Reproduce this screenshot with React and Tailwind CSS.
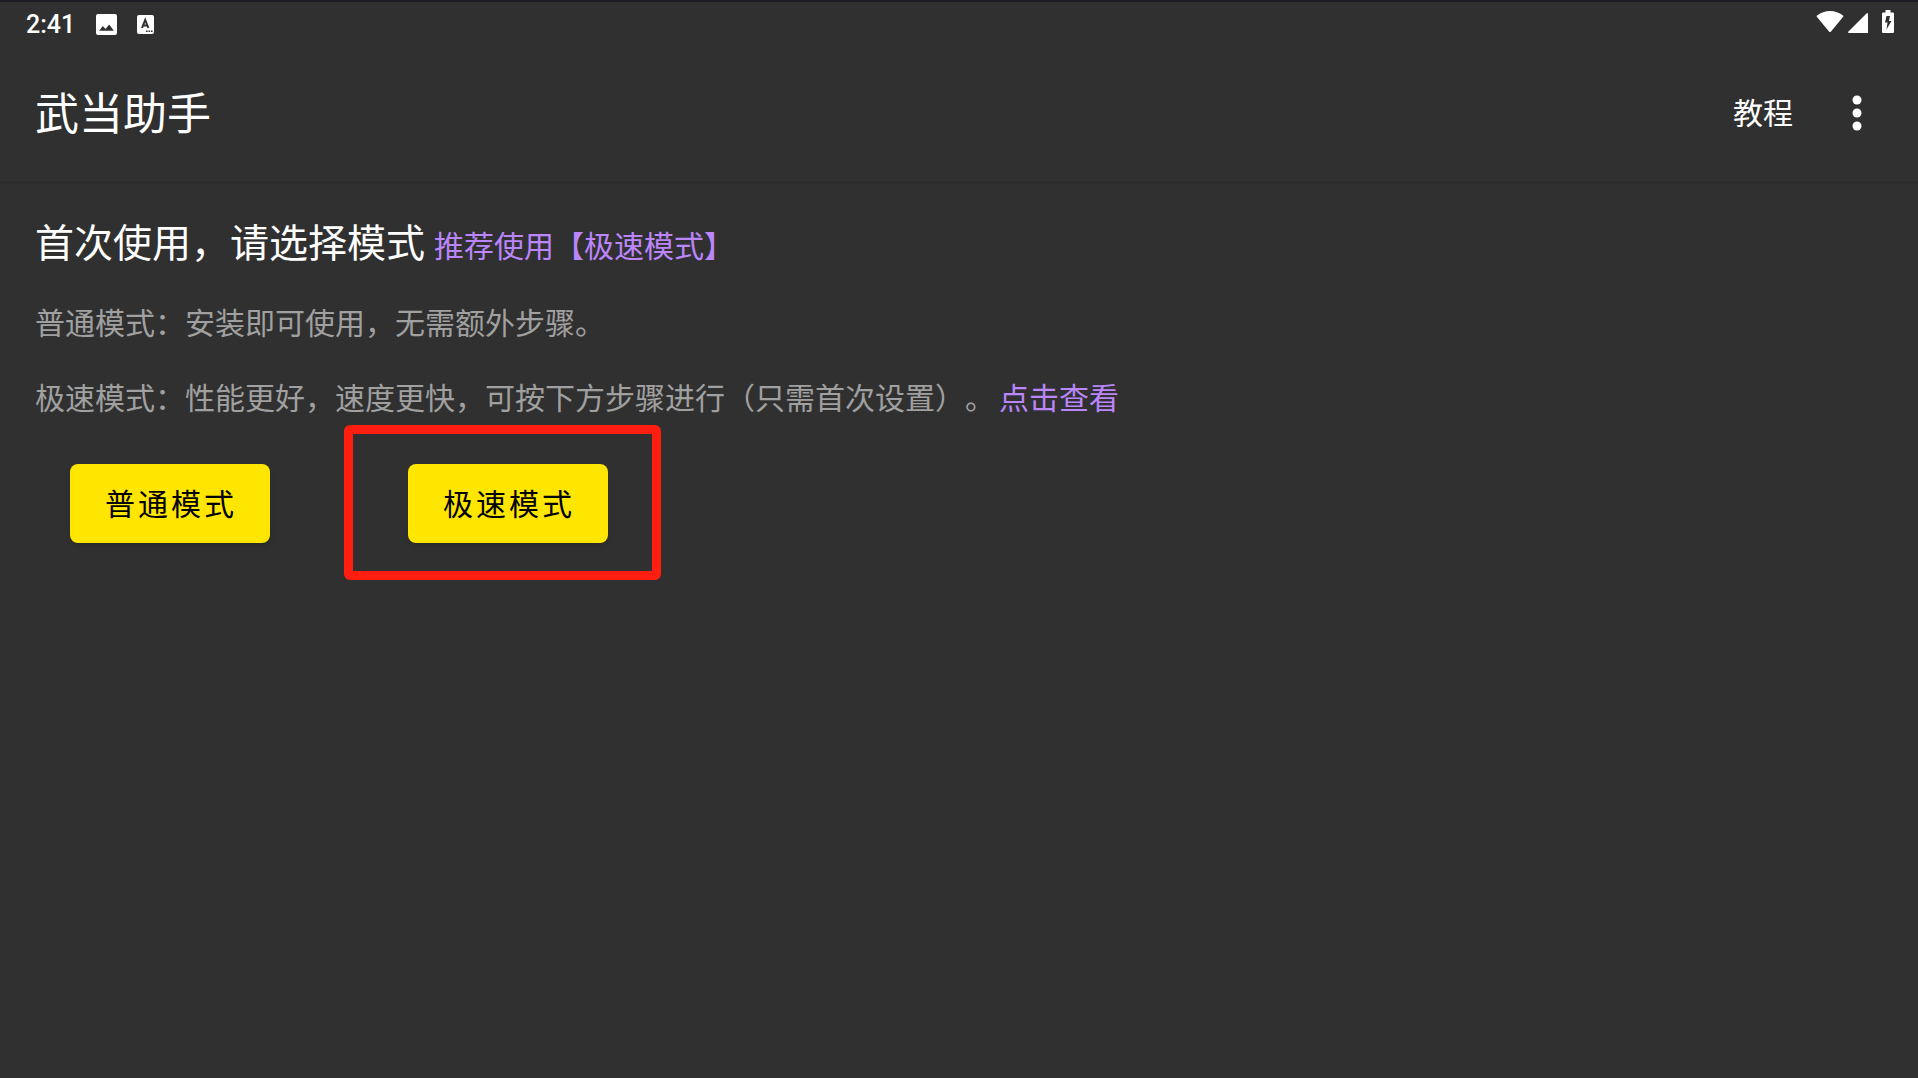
// App.jsx
import React from 'react';

const ImageIcon = () => (
  <svg width="21" height="21" viewBox="0 0 20 20" aria-hidden="true">
    <path
      fill="#fff"
      fillRule="evenodd"
      d="M2 0h16a2 2 0 0 1 2 2v16a2 2 0 0 1-2 2H2a2 2 0 0 1-2-2V2a2 2 0 0 1 2-2zM3 16h14l-4.500-6-3.400 4.200L6.500 11.500z"
    />
  </svg>
);

const KeyboardIcon = () => (
  <svg width="17" height="19" viewBox="0 0 17 19" aria-hidden="true">
    <rect width="17" height="19" rx="2" fill="#fff" />
    <path
      d="M5 13 8.200 5 11.400 13M6 10.400h4.500"
      fill="none"
      stroke="#303030"
      strokeWidth="2"
    />
    <path d="M9 15.500h1.600v1.600H9zM11.500 15.500h1.600v1.600h-1.600zM14 15.500h1.600v1.600H14z" fill="#303030" />
  </svg>
);

const WifiIcon = () => (
  <svg width="28" height="22" viewBox="0 0 28 22" aria-hidden="true">
    <path d="M1 4.500C5 1.500 9 0 14 0s9 1.500 13 4.500a1 1 0 0 1 0 1.500L15 20.500a1.300 1.300 0 0 1-2 0L1 6a1 1 0 0 1 0-1.500z" fill="#fff" />
  </svg>
);

const SignalIcon = () => (
  <svg width="20" height="20" viewBox="0 0 20 20" aria-hidden="true">
    <path d="M19 0a1 1 0 0 1 1 1v19H1a1 1 0 0 1-1-1z" fill="#fff" />
  </svg>
);

const BatteryIcon = () => (
  <svg width="12" height="23" viewBox="0 0 12 23" aria-hidden="true">
    <path d="M3.500 0h5v2.500H11a1 1 0 0 1 1 1V22a1 1 0 0 1-1 1H1a1 1 0 0 1-1-1V3.500a1 1 0 0 1 1-1h2.500z" fill="#fff" />
    <path d="M8 6H4.500L3 12.500h2.500L4.500 19.500 9.500 11H7z" fill="#303030" />
  </svg>
);

const MoreIcon = () => (
  <svg width="10" height="36" viewBox="0 0 10 36" fill="#fff" aria-hidden="true">
    <circle cx="5" cy="5" r="4.500" />
    <circle cx="5" cy="18" r="4.500" />
    <circle cx="5" cy="31" r="4.500" />
  </svg>
);

const StatusBar = () => (
  <div className="flex h-11 items-center justify-between pr-6 pl-[26px]">
    <div className="flex items-center">
      <span className="w-[70px] pt-0.5 text-[25px] leading-7 font-medium">2:41</span>
      <div className="flex items-center gap-5">
        <ImageIcon />
        <KeyboardIcon />
      </div>
    </div>
    <div className="flex items-end pb-1.5">
      <WifiIcon />
      <span className="ml-1">
        <SignalIcon />
      </span>
      <span className="ml-3.5">
        <BatteryIcon />
      </span>
    </div>
  </div>
);

const ModeButton = ({ label }) => (
  <button
    type="button"
    className="h-[79px] w-[200px] rounded-lg bg-[#ffe600] pt-0.5 pl-0.5 text-[30px] tracking-widest text-black shadow-md"
  >
    {label}
  </button>
);

const App = () => {
  return (
    <div className="min-h-screen border-t-2 border-[#1a1a22] bg-[#303030] font-['Roboto','Noto_Sans_CJK_SC',sans-serif] text-white [text-spacing-trim:space-all]">
      <StatusBar />

      <header className="flex h-[138px] items-center justify-between border-b-3 border-[#2c2c2c] pr-14 pl-[35px]">
        <h1 className="pt-0.5 text-[44px] leading-[60px]">武当助手</h1>
        <div className="flex items-center gap-[59px]">
          <button type="button" className="text-[30px] leading-12">
            教程
          </button>
          <button type="button" aria-label="更多" className="pb-0.5">
            <MoreIcon />
          </button>
        </div>
      </header>

      <main className="px-[35px] pt-[30px]">
        <div className="flex items-baseline gap-[9px]">
          <h2 className="text-[39px] leading-[60px]">首次使用，请选择模式</h2>
          <span className="text-[30px] text-[#bb86fc]">推荐使用【极速模式】</span>
        </div>
        <p className="mt-[26px] text-[30px] leading-12 text-[#a0a0a0]">
          普通模式：安装即可使用，无需额外步骤。
        </p>
        <div className="mt-[27px] flex gap-1 text-[30px] leading-12">
          <p className="text-[#a0a0a0]">
            极速模式：性能更好，速度更快，可按下方步骤进行（只需首次设置）。
          </p>
          <a href="#guide" className="text-[#bb86fc]">
            点击查看
          </a>
        </div>

        <div className="mt-[41px] flex gap-[138px] pl-[35px]">
          <ModeButton label="普通模式" />
          <div className="relative">
            <ModeButton label="极速模式" />
            {/* highlight around the recommended mode */}
            <div className="pointer-events-none absolute -top-[39px] -right-[53px] -bottom-[37px] -left-16 rounded-md border-9 border-[#ff1e10]" />
          </div>
        </div>
      </main>
    </div>
  );
};

export default App;
